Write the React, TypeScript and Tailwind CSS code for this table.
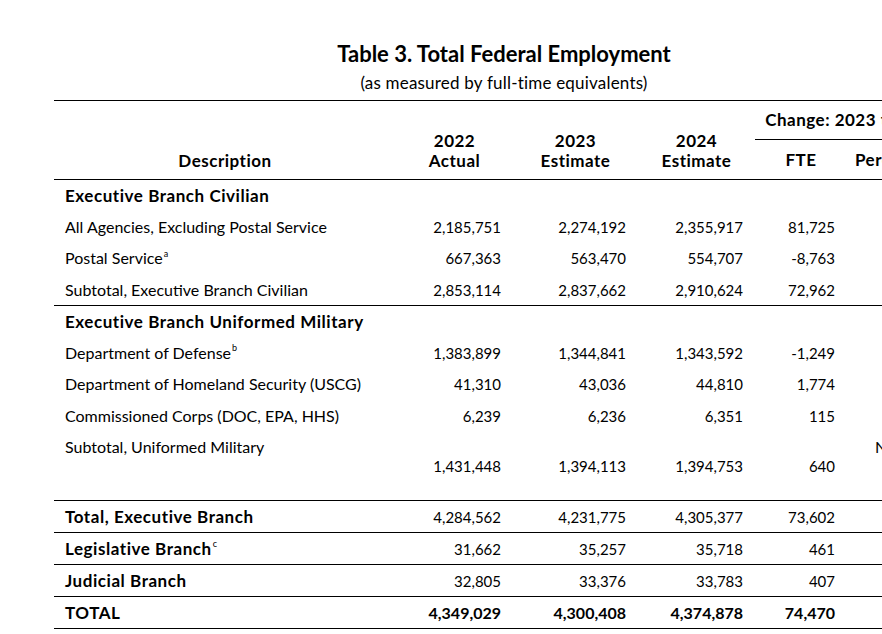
import React from "react";

type Row = {
    label: string;
    note?: string;
    values: string[];
    kind?: "section" | "item" | "subtotal" | "total" | "grand";
    pct?: string;
};

const rows: Row[] = [
    { label: "Executive Branch Civilian", values: [], kind: "section" },
    { label: "All Agencies, Excluding Postal Service", values: ["2,185,751", "2,274,192", "2,355,917", "81,725"] },
    { label: "Postal Service", note: "a", values: ["667,363", "563,470", "554,707", "-8,763"] },
    { label: "Subtotal, Executive Branch Civilian", values: ["2,853,114", "2,837,662", "2,910,624", "72,962"] },
    { label: "Executive Branch Uniformed Military", values: [], kind: "section" },
    { label: "Department of Defense", note: "b", values: ["1,383,899", "1,344,841", "1,343,592", "-1,249"] },
    { label: "Department of Homeland Security (USCG)", values: ["41,310", "43,036", "44,810", "1,774"] },
    { label: "Commissioned Corps (DOC, EPA, HHS)", values: ["6,239", "6,236", "6,351", "115"] },
    { label: "Subtotal, Uniformed Military", values: ["1,431,448", "1,394,113", "1,394,753", "640"], kind: "subtotal", pct: "N/A" },
    { label: "Total, Executive Branch", values: ["4,284,562", "4,231,775", "4,305,377", "73,602"], kind: "total" },
    { label: "Legislative Branch", note: "c", values: ["31,662", "35,257", "35,718", "461"], kind: "total" },
    { label: "Judicial Branch", values: ["32,805", "33,376", "33,783", "407"], kind: "total" },
    { label: "TOTAL", values: ["4,349,029", "4,300,408", "4,374,878", "74,470"], kind: "grand" },
];

const colWidths = ["w-[342px]", "w-[117px]", "w-[125px]", "w-[117px]", "w-[92px]", "w-[107px]"];

const headCell = "text-[17px] leading-[20px] font-bold tracking-[0.5px] border-b border-black";

export default function App() {
    return (
        <div className="w-[882px] h-[634px] overflow-hidden bg-white text-black font-['Lato','Open_Sans',sans-serif]">
            <div className="ml-[54px] w-[900px]">
                {/* Title block */}
                <div className="h-[100px] pt-[40px] text-center">
                    <h1 className="text-[22px] leading-[28px] font-bold">Table 3. Total Federal Employment</h1>
                    <p className="mt-[4px] text-[17px] leading-[22px] tracking-[0.2px]">(as measured by full-time equivalents)</p>
                </div>

                <table className="w-[900px] table-fixed border-collapse">
                    <colgroup>
                        {colWidths.map((w, i) => (
                            <col key={i} className={w} />
                        ))}
                    </colgroup>
                    <thead>
                        <tr className="border-t border-black h-[39px]">
                            <th rowSpan={2} className={`align-bottom pb-[8px] ${headCell}`}>
                                Description
                            </th>
                            <th rowSpan={2} className={`align-bottom pb-[8px] ${headCell}`}>
                                2022<br />Actual
                            </th>
                            <th rowSpan={2} className={`align-bottom pb-[8px] ${headCell}`}>
                                2023<br />Estimate
                            </th>
                            <th rowSpan={2} className={`align-bottom pb-[8px] ${headCell}`}>
                                2024<br />Estimate
                            </th>
                            <th colSpan={2} className={`align-middle whitespace-nowrap ${headCell}`}>
                                Change: 2023 to 2024
                            </th>
                        </tr>
                        <tr className="h-[40px]">
                            <th className={`align-middle ${headCell}`}>FTE</th>
                            <th className={`align-middle text-left pl-[8px] ${headCell}`}>Percent</th>
                        </tr>
                    </thead>
                    <tbody>
                        {rows.map((r, i) => {
                            const bold = r.kind === "section" || r.kind === "total" || r.kind === "grand";
                            const ruled = r.kind === "total" || r.kind === "grand" || (r.kind === "section" && i > 0);
                            const height =
                                r.kind === "subtotal" ? "h-[69px]" : r.kind === "total" || r.kind === "grand" ? "h-[32px]" : "h-[31.5px]";
                            return (
                                <tr key={i} className={`${height} ${ruled ? "border-t border-black" : ""} ${r.kind === "grand" ? "border-b border-black" : ""}`}>
                                    <td
                                        className={`pl-[11px] ${r.kind === "subtotal" ? "align-top pt-[4px]" : "align-middle"} ${
                                            bold ? "font-bold text-[17px] tracking-[0.55px]" : "text-[16px]"
                                        } leading-[22px] whitespace-nowrap`}
                                    >
                                        {r.label}
                                        {r.note && <sup className="text-[9px] font-normal tracking-normal ml-[1px] align-[3px]">{r.note}</sup>}
                                    </td>
                                    {[0, 1, 2, 3].map((c) => (
                                        <td
                                            key={c}
                                            className={`pr-[12px] text-right align-middle text-[15px] leading-[22px] ${
                                                r.kind === "grand" ? "font-bold text-[16px]" : ""
                                            }`}
                                        >
                                            {r.values[c] ?? ""}
                                        </td>
                                    ))}
                                    <td className={`${r.kind === "subtotal" ? "align-top pt-[4px]" : "align-middle"} pl-[28px] text-[16px] leading-[22px]`}>
                                        {r.pct ?? ""}
                                    </td>
                                </tr>
                            );
                        })}
                    </tbody>
                </table>
            </div>
        </div>
    );
}
